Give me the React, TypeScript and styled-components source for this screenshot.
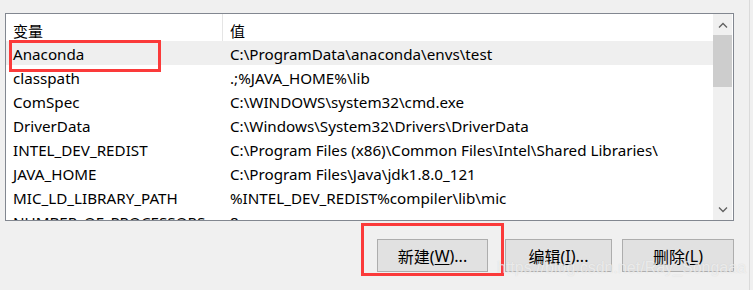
import React from 'react'
import styled, { createGlobalStyle } from 'styled-components'

const GlobalStyle = createGlobalStyle`
  html, body {
    margin: 0;
    padding: 0;
    background: #f0f0f0;
  }
  body {
    font-family: "Noto Sans", "Noto Sans CJK SC", sans-serif;
    color: #000;
  }
`

const Dialog = styled.div`
  position: relative;
  width: 753px;
  height: 290px;
  background: #f0f0f0;
  box-sizing: border-box;
  padding: 13px 0 0 5px;
  overflow: hidden;
`

const EdgeLine = styled.div`
  position: absolute;
  top: 0;
  right: 3px;
  width: 1px;
  height: 100%;
  background: #dadada;
`

const ListBox = styled.div`
  width: 729px;
  height: 208px;
  box-sizing: border-box;
  border: 1px solid #828790;
  background: #fff;
  display: flex;
  overflow: hidden;
`

const Table = styled.div`
  flex: 1;
  display: flex;
  flex-direction: column;
  overflow: hidden;
`

const HeaderRow = styled.div`
  display: grid;
  grid-template-columns: 217px 1fr;
  height: 27px;
  flex: none;
`

const HeaderCell = styled.div<{ $divider?: boolean }>`
  font-size: 15px;
  line-height: 27px;
  padding: 4px 0 0 7px;
  box-sizing: border-box;
  border-right: ${(p) => (p.$divider ? '1px solid #e5e5e5' : 'none')};
`

const Row = styled.div<{ $hover?: boolean }>`
  display: grid;
  grid-template-columns: 217px 1fr;
  height: 24px;
  flex: none;
  background: ${(p) => (p.$hover ? '#efefef' : 'transparent')};
`

const Cell = styled.div`
  font-size: 15.2px;
  line-height: 24px;
  padding: 1px 0 0 7px;
  white-space: nowrap;
`

const Scrollbar = styled.div`
  width: 19px;
  margin: 0 1px 0 0;
  background: #f0f0f0;
  display: flex;
  flex-direction: column;
  align-items: center;
`

const Arrow = styled.div`
  height: 21px;
  display: flex;
  align-items: center;
  justify-content: center;
  flex: none;
`

const Track = styled.div`
  flex: 1;
  width: 100%;
`

const Thumb = styled.div`
  width: 100%;
  height: 52px;
  background: #cdcdcd;
`

const ButtonBar = styled.div`
  display: flex;
  width: 729px;
  justify-content: flex-end;
  margin-top: 18px;
`

const Button = styled.div<{ $w: number; $gap: number }>`
  width: ${(p) => p.$w}px;
  height: 33px;
  margin-left: ${(p) => p.$gap}px;
  box-sizing: border-box;
  border: 1px solid #adadad;
  background: #e1e1e1;
  font-size: 16px;
  padding-top: 1px;
  display: flex;
  align-items: center;
  justify-content: center;
  u {
    text-decoration: underline;
    text-underline-offset: 2px;
  }
`

const Mark = styled.div<{ $x: number; $y: number; $w: number; $h: number }>`
  position: absolute;
  left: ${(p) => p.$x}px;
  top: ${(p) => p.$y}px;
  width: ${(p) => p.$w}px;
  height: ${(p) => p.$h}px;
  box-sizing: border-box;
  border: 3px solid #fb3a3a;
  pointer-events: none;
`

const Watermark = styled.div`
  position: absolute;
  left: 497px;
  top: 259px;
  font-family: "Liberation Sans", Arial, sans-serif;
  font-size: 16px;
  color: rgba(255, 255, 255, 0.6);
  text-shadow: 0 0 1px rgba(170, 170, 170, 0.45);
  white-space: nowrap;
`

const Chevron = ({ up }: { up?: boolean }) => (
  <svg width="10" height="6" viewBox="0 0 10 6">
    <path
      d={up ? 'M1 5.5 L5 1.5 L9 5.5' : 'M1 0.5 L5 4.5 L9 0.5'}
      fill="none"
      stroke="#606060"
      strokeWidth="1.3"
    />
  </svg>
)

const vars: [string, string][] = [
  ['Anaconda', 'C:\\ProgramData\\anaconda\\envs\\test'],
  ['classpath', '.;%JAVA_HOME%\\lib'],
  ['ComSpec', 'C:\\WINDOWS\\system32\\cmd.exe'],
  ['DriverData', 'C:\\Windows\\System32\\Drivers\\DriverData'],
  ['INTEL_DEV_REDIST', 'C:\\Program Files (x86)\\Common Files\\Intel\\Shared Libraries\\'],
  ['JAVA_HOME', 'C:\\Program Files\\Java\\jdk1.8.0_121'],
  ['MIC_LD_LIBRARY_PATH', '%INTEL_DEV_REDIST%compiler\\lib\\mic'],
  ['NUMBER_OF_PROCESSORS', '8'],
]

const App: React.FC = () => {
  return (
    <Dialog>
      <GlobalStyle />
      <EdgeLine />
      <ListBox>
        <Table>
          <HeaderRow>
            <HeaderCell $divider>变量</HeaderCell>
            <HeaderCell>值</HeaderCell>
          </HeaderRow>
          {vars.map(([name, value], i) => (
            <Row key={name} $hover={i === 0}>
              <Cell>{name}</Cell>
              <Cell>{value}</Cell>
            </Row>
          ))}
        </Table>
        <Scrollbar>
          <Arrow>
            <Chevron up />
          </Arrow>
          <Track>
            <Thumb />
          </Track>
          <Arrow>
            <Chevron />
          </Arrow>
        </Scrollbar>
      </ListBox>
      <ButtonBar>
        <Button $w={111} $gap={0}>
          新建(<u>W</u>)...
        </Button>
        <Button $w={107} $gap={17}>
          编辑(<u>I</u>)...
        </Button>
        <Button $w={112} $gap={10}>
          删除(<u>L</u>)
        </Button>
      </ButtonBar>
      <Mark $x={9} $y={40} $w={152} $h={32} />
      <Mark $x={361} $y={223} $w={143} $h={53} />
      <Watermark>https://blog.csdn.net/Ray_Songaaa</Watermark>
    </Dialog>
  )
}

export default App
